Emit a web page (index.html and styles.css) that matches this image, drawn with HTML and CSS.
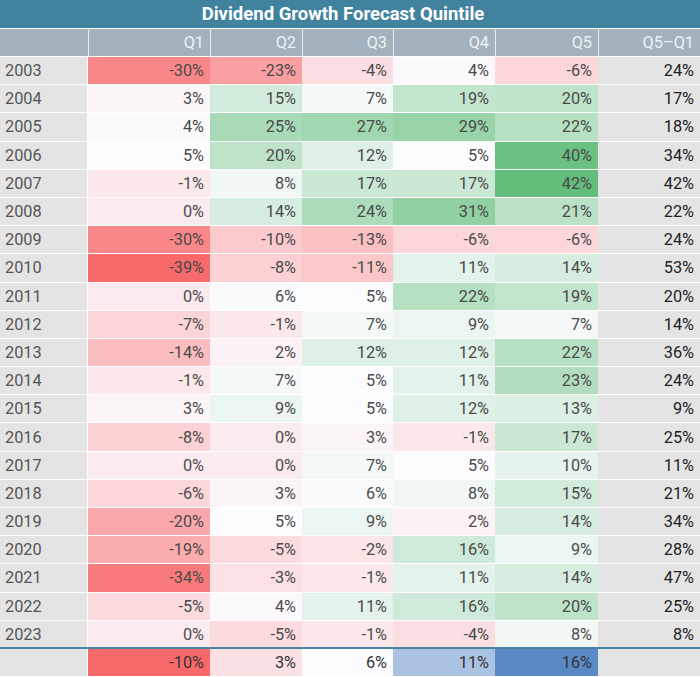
FILE: index.html
```html
<!DOCTYPE html>
<html>
<head>
<meta charset="utf-8">
<link rel="stylesheet" href="styles.css">
</head>
<body>
<div class="table">
  <div class="title">Dividend Growth Forecast Quintile</div>
  <div class="row head">
    <div class="hcell corner"></div><div class="hcell">Q1</div><div class="hcell">Q2</div><div class="hcell">Q3</div><div class="hcell">Q4</div><div class="hcell">Q5</div><div class="hcell">Q5–Q1</div>
  </div>
  <div class="body">
    <div class="row data"><div class="cell year">2003</div><div class="cell q">-30%</div><div class="cell q">-23%</div><div class="cell q">-4%</div><div class="cell q">4%</div><div class="cell q">-6%</div><div class="cell diff">24%</div></div>
    <div class="row data"><div class="cell year">2004</div><div class="cell q">3%</div><div class="cell q">15%</div><div class="cell q">7%</div><div class="cell q">19%</div><div class="cell q">20%</div><div class="cell diff">17%</div></div>
    <div class="row data"><div class="cell year">2005</div><div class="cell q">4%</div><div class="cell q">25%</div><div class="cell q">27%</div><div class="cell q">29%</div><div class="cell q">22%</div><div class="cell diff">18%</div></div>
    <div class="row data"><div class="cell year">2006</div><div class="cell q">5%</div><div class="cell q">20%</div><div class="cell q">12%</div><div class="cell q">5%</div><div class="cell q">40%</div><div class="cell diff">34%</div></div>
    <div class="row data"><div class="cell year">2007</div><div class="cell q">-1%</div><div class="cell q">8%</div><div class="cell q">17%</div><div class="cell q">17%</div><div class="cell q">42%</div><div class="cell diff">42%</div></div>
    <div class="row data"><div class="cell year">2008</div><div class="cell q">0%</div><div class="cell q">14%</div><div class="cell q">24%</div><div class="cell q">31%</div><div class="cell q">21%</div><div class="cell diff">22%</div></div>
    <div class="row data"><div class="cell year">2009</div><div class="cell q">-30%</div><div class="cell q">-10%</div><div class="cell q">-13%</div><div class="cell q">-6%</div><div class="cell q">-6%</div><div class="cell diff">24%</div></div>
    <div class="row data"><div class="cell year">2010</div><div class="cell q">-39%</div><div class="cell q">-8%</div><div class="cell q">-11%</div><div class="cell q">11%</div><div class="cell q">14%</div><div class="cell diff">53%</div></div>
    <div class="row data"><div class="cell year">2011</div><div class="cell q">0%</div><div class="cell q">6%</div><div class="cell q">5%</div><div class="cell q">22%</div><div class="cell q">19%</div><div class="cell diff">20%</div></div>
    <div class="row data"><div class="cell year">2012</div><div class="cell q">-7%</div><div class="cell q">-1%</div><div class="cell q">7%</div><div class="cell q">9%</div><div class="cell q">7%</div><div class="cell diff">14%</div></div>
    <div class="row data"><div class="cell year">2013</div><div class="cell q">-14%</div><div class="cell q">2%</div><div class="cell q">12%</div><div class="cell q">12%</div><div class="cell q">22%</div><div class="cell diff">36%</div></div>
    <div class="row data"><div class="cell year">2014</div><div class="cell q">-1%</div><div class="cell q">7%</div><div class="cell q">5%</div><div class="cell q">11%</div><div class="cell q">23%</div><div class="cell diff">24%</div></div>
    <div class="row data"><div class="cell year">2015</div><div class="cell q">3%</div><div class="cell q">9%</div><div class="cell q">5%</div><div class="cell q">12%</div><div class="cell q">13%</div><div class="cell diff">9%</div></div>
    <div class="row data"><div class="cell year">2016</div><div class="cell q">-8%</div><div class="cell q">0%</div><div class="cell q">3%</div><div class="cell q">-1%</div><div class="cell q">17%</div><div class="cell diff">25%</div></div>
    <div class="row data"><div class="cell year">2017</div><div class="cell q">0%</div><div class="cell q">0%</div><div class="cell q">7%</div><div class="cell q">5%</div><div class="cell q">10%</div><div class="cell diff">11%</div></div>
    <div class="row data"><div class="cell year">2018</div><div class="cell q">-6%</div><div class="cell q">3%</div><div class="cell q">6%</div><div class="cell q">8%</div><div class="cell q">15%</div><div class="cell diff">21%</div></div>
    <div class="row data"><div class="cell year">2019</div><div class="cell q">-20%</div><div class="cell q">5%</div><div class="cell q">9%</div><div class="cell q">2%</div><div class="cell q">14%</div><div class="cell diff">34%</div></div>
    <div class="row data"><div class="cell year">2020</div><div class="cell q">-19%</div><div class="cell q">-5%</div><div class="cell q">-2%</div><div class="cell q">16%</div><div class="cell q">9%</div><div class="cell diff">28%</div></div>
    <div class="row data"><div class="cell year">2021</div><div class="cell q">-34%</div><div class="cell q">-3%</div><div class="cell q">-1%</div><div class="cell q">11%</div><div class="cell q">14%</div><div class="cell diff">47%</div></div>
    <div class="row data"><div class="cell year">2022</div><div class="cell q">-5%</div><div class="cell q">4%</div><div class="cell q">11%</div><div class="cell q">16%</div><div class="cell q">20%</div><div class="cell diff">25%</div></div>
    <div class="row data"><div class="cell year">2023</div><div class="cell q">0%</div><div class="cell q">-5%</div><div class="cell q">-1%</div><div class="cell q">-4%</div><div class="cell q">8%</div><div class="cell diff">8%</div></div>
  </div>
  <div class="row foot">
    <div class="cell year"></div><div class="cell f">-10%</div><div class="cell f">3%</div><div class="cell f">6%</div><div class="cell f">11%</div><div class="cell f">16%</div><div class="cell diff"></div>
  </div>
</div>
<script src="script.js"></script>
</body>
</html>
```

FILE: styles.css
```css
* { box-sizing: border-box; }
html, body { margin: 0; padding: 0; background: #fff; }
body {
  font-family: Roboto, "Liberation Sans", sans-serif;
  font-size: 16.3px;
}
.table { width: 700px; }
.title {
  height: 29px;
  background: #41829f;
  border-bottom: 1px solid #fff;
  color: #fff;
  font-weight: 700;
  font-size: 18.5px;
  display: flex;
  align-items: center;
  justify-content: center;
  padding-right: 14px;
}
.row {
  display: grid;
  grid-template-columns: 88px 122px 92px 91px 102px 103px 102px;
}
.cell, .hcell {
  display: flex;
  align-items: center;
  justify-content: flex-end;
  padding-right: 6px;
  color: #4a4a4a;
  white-space: nowrap;
}
.head {
  height: 28px;
  border-bottom: 1px solid #fff;
}
.hcell {
  background: #a3b2bd;
  color: #eef2f5;
  border-left: 1px solid rgba(255, 255, 255, 0.75);
}
.hcell.corner { border-left: none; }
.data {
  height: 28.2px;
  border-bottom: 1.5px solid #fff;
}
.data:last-child {
  height: 26.7px;
  border-bottom: none;
}
.year {
  justify-content: flex-start;
  padding-left: 5px;
  background: #e4e4e4;
  color: #555;
  border-right: 1px solid #fff;
}
.diff {
  background: #e4e4e4;
  color: #222;
}
.foot {
  height: 29px;
  border-top: 2px solid #4784a3;
}
.foot .f { color: #333; }
```

FILE: script.js
```js
(function () {
  var RED = [248, 105, 107], WHITE = [252, 252, 255], GREEN = [99, 190, 123], BLUE = [90, 138, 198];
  function mix(a, b, t) {
    return 'rgb(' + a.map(function (c, i) { return Math.round(c + (b[i] - c) * t); }).join(',') + ')';
  }
  function scale(v, min, mid, max, hi) {
    if (v <= mid) return mix(RED, WHITE, Math.max(0, (v - min) / (mid - min)));
    return mix(WHITE, hi, Math.min(1, (v - mid) / (max - mid)));
  }
  function val(el) { return parseFloat(el.textContent.replace('\u2212', '-')); }
  document.querySelectorAll('.data .q').forEach(function (el) {
    el.style.backgroundColor = scale(val(el), -39, 5, 42, GREEN);
  });
  document.querySelectorAll('.foot .f').forEach(function (el) {
    el.style.backgroundColor = scale(val(el), -10, 6, 16, BLUE);
  });
})();
```
